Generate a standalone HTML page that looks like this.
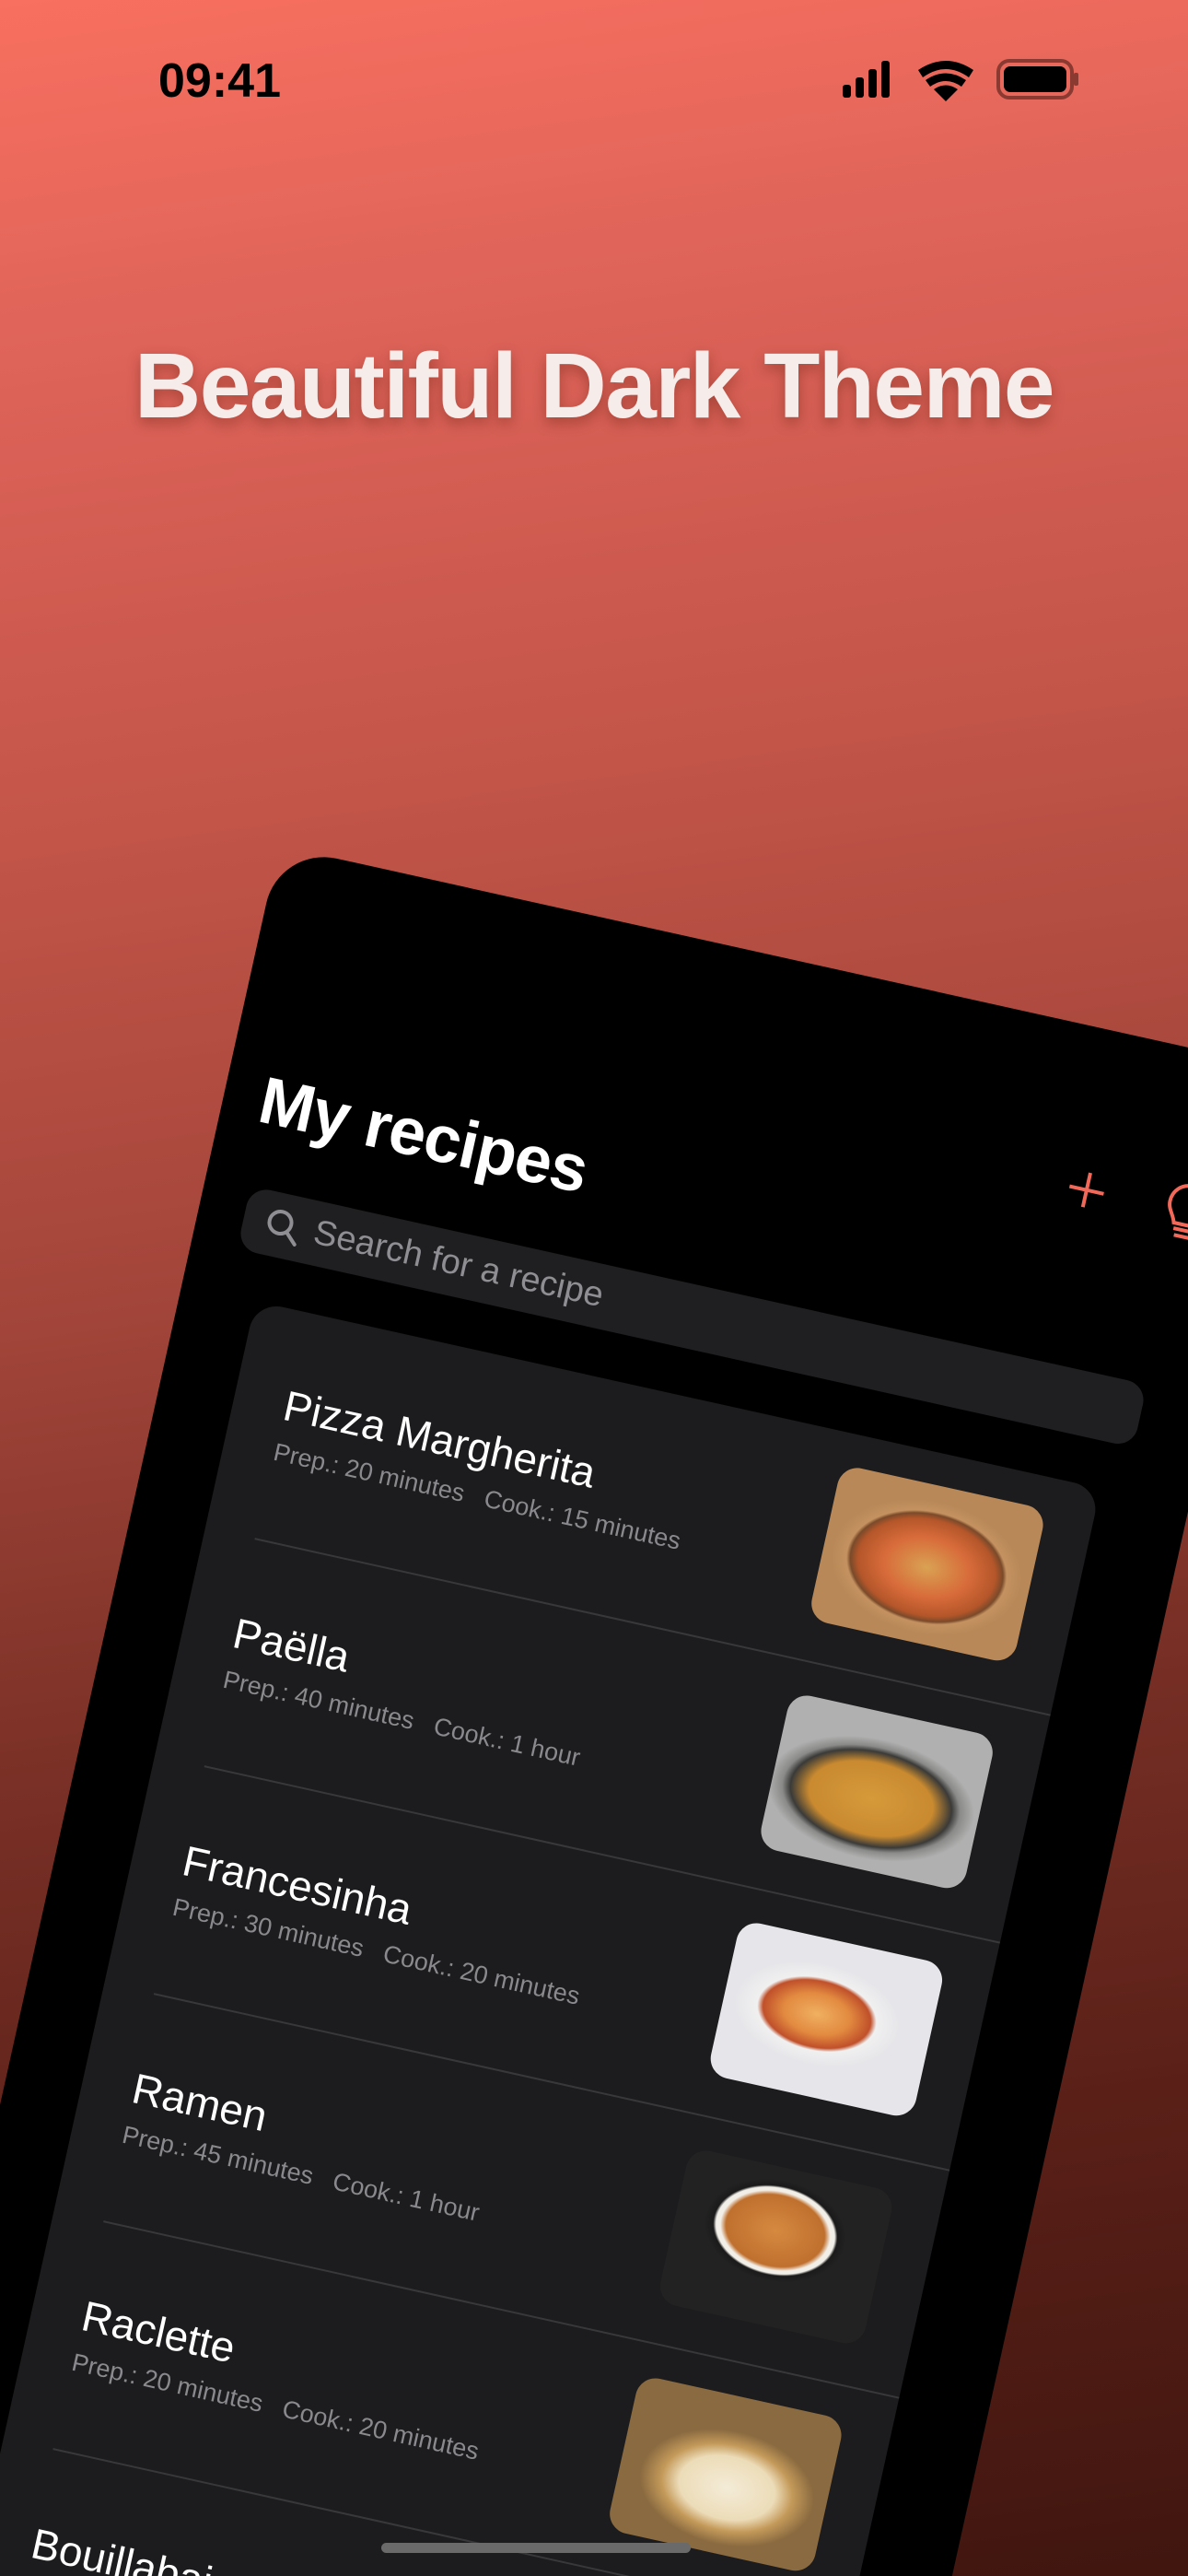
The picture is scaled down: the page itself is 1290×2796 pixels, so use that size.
<!DOCTYPE html>
<html style="overflow:hidden;width:1290px;height:2796px"><head><meta charset="utf-8"><style>
*{margin:0;padding:0;box-sizing:border-box}
html,body{width:1290px;height:2796px;overflow:hidden;background:#40160f}
#wrap{position:relative;width:1290px;height:2796px;overflow:hidden;font-family:"Liberation Sans",sans-serif;
background:linear-gradient(172deg,#f8705f 0%,#e0645a 12%,#c45549 30%,#a3453a 48%,#7a3026 65%,#5a2018 82%,#40160f 100%);}
.time{position:absolute;left:172px;top:58px;font-size:52px;font-weight:700;color:#000}
.head{position:absolute;left:0;width:1290px;top:362px;text-align:center;font-size:100px;font-weight:700;color:#f6ecea;letter-spacing:-1.5px;text-shadow:0 6px 14px rgba(80,20,10,.35)}
.phone{position:absolute;left:303px;top:918px;width:1120px;height:2700px;background:#000;border-radius:64px;transform-origin:0 0;transform:rotate(12.5deg)}
.title{position:absolute;left:40px;top:232px;font-size:72px;font-weight:700;color:#fff;letter-spacing:-1px}
.search{position:absolute;left:50px;top:367px;width:997px;height:70px;background:#1f1f21;border-radius:22px}
.search span{position:absolute;left:78px;top:13px;font-size:38px;color:#8e8e93}
.card{position:absolute;left:82px;top:488px;width:940px;height:2200px;background:#1c1c1e;border-radius:30px;overflow:hidden}
.row{position:absolute;left:0;width:940px;height:253px}
.row .t{position:absolute;left:55px;top:76px;font-size:46px;color:#fff}
.row .s{position:absolute;left:55px;top:140px;font-size:27px;color:#8a8a8e;font-weight:300;white-space:pre}
.row .sep{position:absolute;left:55px;right:0;bottom:0;height:2px;background:#38383a}
.row .img{position:absolute;left:660px;top:35px;width:228px;height:172px;border-radius:22px;overflow:hidden}
.home{position:absolute;left:414px;top:2760px;width:336px;height:11px;border-radius:6px;background:#6a6a6a}
</style></head><body><div id="wrap">
<div class="time">09:41</div>
<svg style="position:absolute;left:912px;top:62px" width="262" height="48" viewBox="0 0 262 48">
 <rect x="3" y="30" width="9" height="14" rx="3" fill="#000"/>
 <rect x="17" y="22" width="9" height="22" rx="3" fill="#000"/>
 <rect x="31" y="13" width="9" height="31" rx="3" fill="#000"/>
 <rect x="45" y="4" width="9" height="40" rx="3" fill="#000"/>
 <path d="M85 14 Q115 -6 145 14 L140 22 Q115 4 90 22Z M93 25 Q115 10 137 25 L132 32 Q115 20 98 32Z M102 35 Q115 26 128 35 L115 48Z" fill="#000"/>
 <rect x="172" y="4" width="80" height="40" rx="12" fill="none" stroke="#8a3a30" stroke-width="4"/>
 <rect x="178" y="10" width="68" height="28" rx="7" fill="#000"/>
 <rect x="254" y="17" width="5" height="14" rx="2" fill="#8a3a30"/>
</svg>
<div class="head">Beautiful Dark Theme</div>
<div class="phone">
 <svg style="position:absolute;left:912px;top:150px" width="50" height="50" viewBox="0 0 50 50"><path d="M25 6V44M6 25H44" stroke="#f2695a" stroke-width="4"/></svg>
 <svg style="position:absolute;left:1020px;top:140px" width="60" height="70" viewBox="0 0 60 70"><path d="M30 6C16 6 8 16 8 27c0 9 7 14 9 22h26c2-8 9-13 9-22C52 16 44 6 30 6ZM18 55h24M20 62h20" fill="none" stroke="#f2695a" stroke-width="4"/></svg>
 <div class="title">My recipes</div>
 <div class="search">
  <svg style="position:absolute;left:22px;top:14px" width="44" height="44" viewBox="0 0 44 44"><circle cx="18" cy="18" r="12" fill="none" stroke="#8e8e93" stroke-width="4"/><path d="M27 27L38 38" stroke="#8e8e93" stroke-width="4" stroke-linecap="round"/></svg>
  <span>Search for a recipe</span>
 </div>
 <div class="card">
  <div class="row" style="top:0">
   <div class="t">Pizza Margherita</div><div class="s">Prep.: 20 minutes   Cook.: 15 minutes</div><div class="sep"></div>
   <div class="img" style="background:radial-gradient(ellipse 46% 42% at 50% 52%,#d9a253 0%,#d86b3a 45%,#b4562a 72%,#7a4a2a 80%,#c49260 84%,#b88858 100%)"></div>
  </div>
  <div class="row" style="top:253px">
   <div class="t">Paëlla</div><div class="s">Prep.: 40 minutes   Cook.: 1 hour</div><div class="sep"></div>
   <div class="img" style="background:radial-gradient(ellipse 50% 38% at 48% 55%,#d69a3a 0%,#c98a30 60%,#3a3a38 78%,#8a8a88 86%,#b0b0b0 100%)"></div>
  </div>
  <div class="row" style="top:506px">
   <div class="t">Francesinha</div><div class="s">Prep.: 30 minutes   Cook.: 20 minutes</div><div class="sep"></div>
   <div class="img" style="background:radial-gradient(ellipse 40% 32% at 45% 48%,#f0b060 0%,#e28a40 40%,#c0502a 65%,#f0f0f0 72%,#e6e6ea 100%)"></div>
  </div>
  <div class="row" style="top:759px">
   <div class="t">Ramen</div><div class="s">Prep.: 45 minutes   Cook.: 1 hour</div><div class="sep"></div>
   <div class="img" style="background:radial-gradient(ellipse 34% 32% at 48% 40%,#d58a40 0%,#c0702e 70%,#f2efe8 78%,#f2efe8 84%,#1a1a1a 88%,#222 100%)"></div>
  </div>
  <div class="row" style="top:1012px">
   <div class="t">Raclette</div><div class="s">Prep.: 20 minutes   Cook.: 20 minutes</div><div class="sep"></div>
   <div class="img" style="background:radial-gradient(ellipse 42% 36% at 52% 58%,#f4ecd8 0%,#ecdcb8 55%,#c49a5a 75%,#8a6a40 100%)"></div>
  </div>
  <div class="row" style="top:1265px">
   <div class="t">Bouillabaisse</div><div class="s">Prep.: 30 minutes   Cook.: 1 hour</div>
   <div class="img" style="background:radial-gradient(ellipse 42% 36% at 52% 58%,#d0702e 0%,#a04a20 70%,#e8e4dc 100%)"></div>
  </div>
 </div>
</div>
<div class="home"></div>
</div></body></html>
